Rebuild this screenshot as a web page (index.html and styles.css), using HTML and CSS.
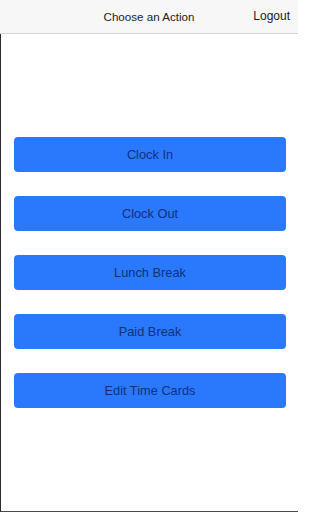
FILE: index.html
```html
<!DOCTYPE html>
<html>
<head>
<meta charset="utf-8">
<link rel="stylesheet" href="styles.css">
</head>
<body>
<header class="bar">
  <div class="title">Choose an Action</div>
  <div class="logout">Logout</div>
</header>
<main class="content">
  <div class="actions">
    <button class="btn">Clock In</button>
    <button class="btn">Clock Out</button>
    <button class="btn">Lunch Break</button>
    <button class="btn">Paid Break</button>
    <button class="btn">Edit Time Cards</button>
  </div>
</main>
</body>
</html>
```
FILE: styles.css
```css
html, body {
  margin: 0;
  padding: 0;
  background: #ffffff;
  width: 298px;
  height: 512px;
  overflow: hidden;
  font-family: "Liberation Sans", Arial, sans-serif;
}
.bar {
  width: 298px;
  height: 34px;
  box-sizing: border-box;
  border-bottom: 1px solid #d4d4d4;
  background: #f7f7f7;
  display: grid;
  grid-template-columns: 1fr auto 1fr;
  align-items: center;
  padding: 0 8px 0 8px;
}
.title {
  grid-column: 2;
  font-size: 11.6px;
  color: #1c1c1c;
  padding-bottom: 1px;
}
.logout {
  grid-column: 3;
  justify-self: end;
  font-size: 12px;
  color: #1c1c1c;
  padding-bottom: 1px;
}
.content {
  width: 298px;
  height: 478px;
  box-sizing: border-box;
  border-left: 1px solid #2a2a2a;
  border-bottom: 1px solid #4a4a4a;
}
.actions {
  display: flex;
  flex-direction: column;
  gap: 24px;
  padding: 103px 12px 0 13px;
}
.btn {
  height: 35px;
  border: none;
  border-radius: 4px;
  background: #2a79fd;
  color: #12307e;
  font-family: "Liberation Sans", Arial, sans-serif;
  font-size: 12.8px;
  padding: 0;
}
```
